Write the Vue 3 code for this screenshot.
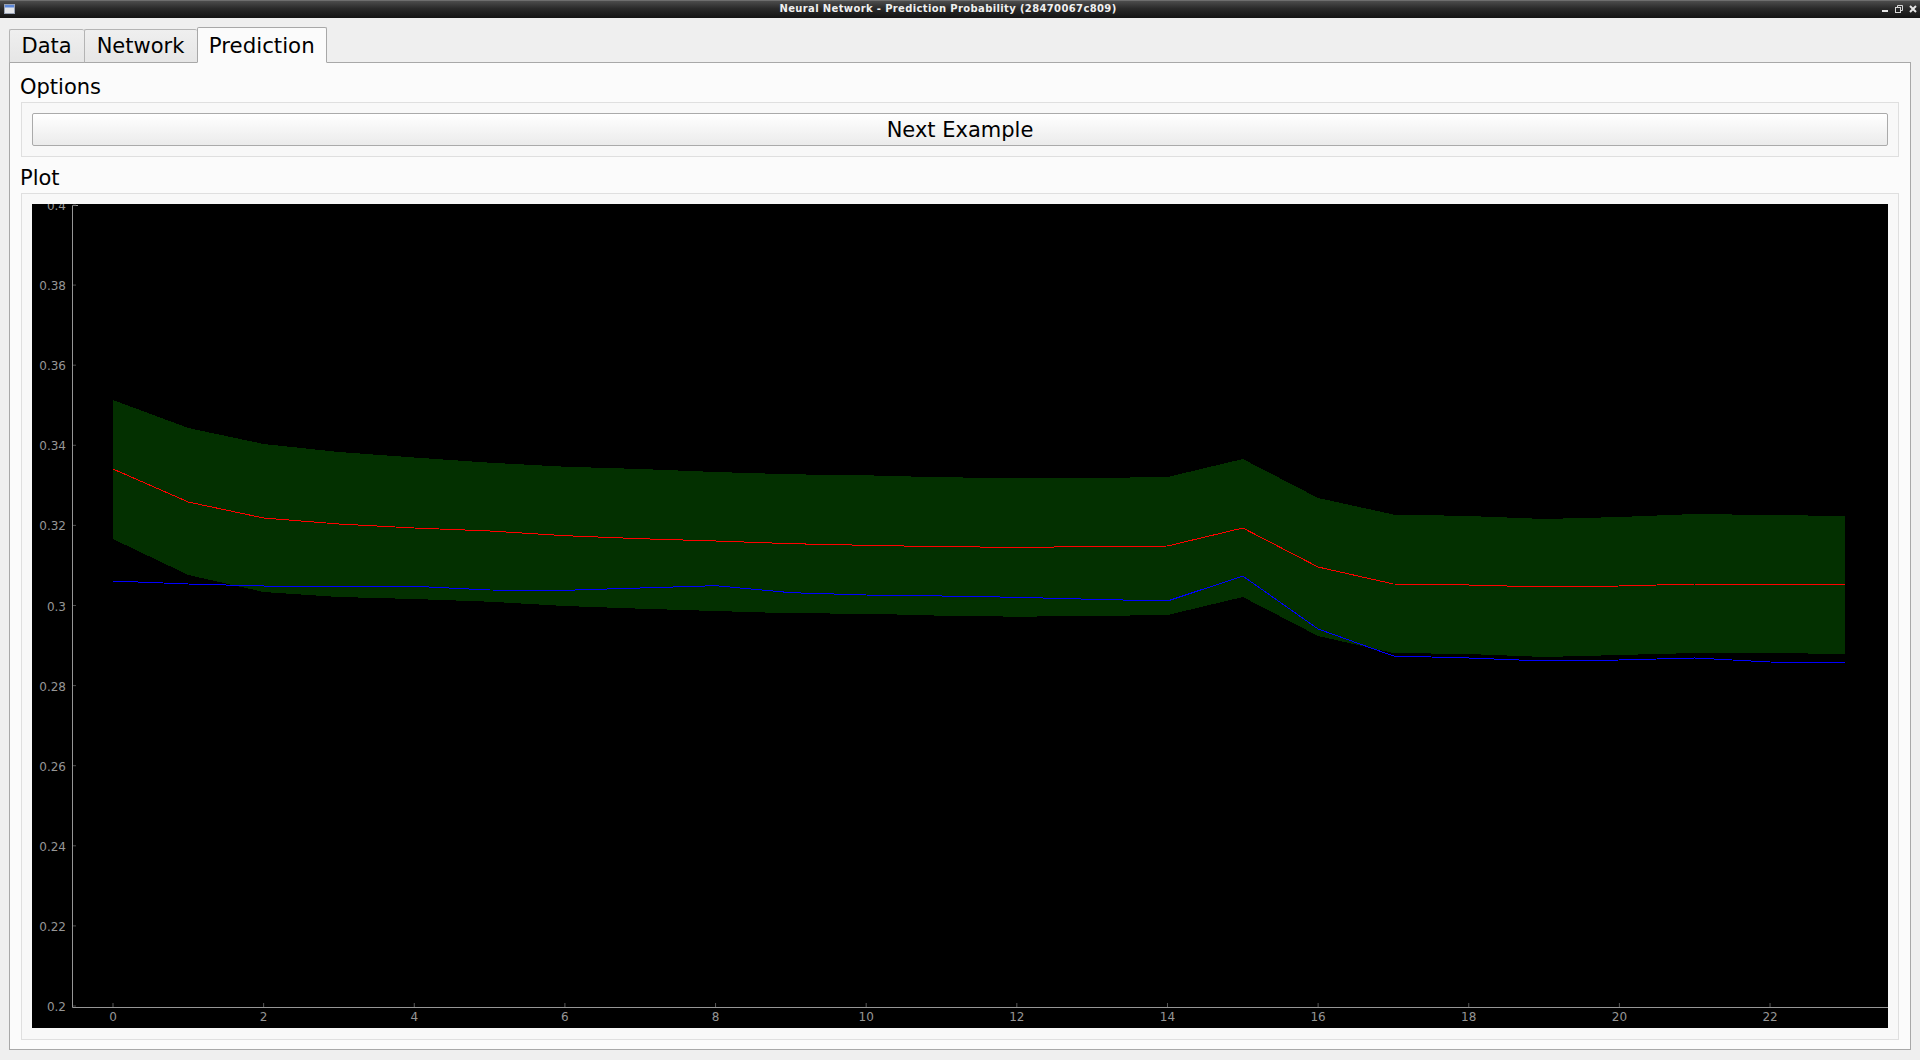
<script setup>
const xAt = (i) => 113 + i * 75.32

const top = [400, 428, 444, 452, 457.5, 462.7, 466.7, 469, 472, 474.3, 475.3, 477.3, 478, 478, 477, 459, 498, 514.5, 516, 519, 517, 514, 515, 516]
const bottom = [539, 575, 592, 597, 599, 601.7, 606, 608.7, 611, 613.3, 613.7, 615.7, 616.7, 616, 615, 597, 636, 653, 654, 657, 655, 653, 653, 654]
const red = [469, 502, 518, 524, 528, 531, 535.7, 538.7, 541, 543.7, 545.3, 546.7, 547.3, 546.7, 546, 528, 567, 584, 585, 587, 586, 584, 584, 585]
const blue = [581, 584, 586, 586, 586.3, 590, 590.3, 588, 585.7, 592.7, 595, 596, 597.3, 599.3, 601, 576, 629, 656, 658, 661, 660, 658, 662, 663]

const toPoints = (values) => values.map((v, i) => `${xAt(i).toFixed(1)},${v}`).join(' ')

const bandPoints = toPoints(top) + ' ' +
  [...bottom].map((v, i) => `${xAt(i).toFixed(1)},${v}`).reverse().join(' ')
const redPoints = toPoints(red)
const bluePoints = toPoints(blue)

const xTicks = Array.from({ length: 12 }, (_, k) => ({ label: String(k * 2), x: xAt(k * 2) }))
const yTicks = ['0.4', '0.38', '0.36', '0.34', '0.32', '0.3', '0.28', '0.26', '0.24', '0.22', '0.2']
  .map((label, k) => ({ label, y: 205 + k * 80.1 }))
const tabs = ['Data', 'Network', 'Prediction']
</script>

<template>
  <div class="window">
    <header class="titlebar">
      <svg class="app-icon" width="11" height="10" viewBox="0 0 11 10">
        <rect x="0.5" y="0.5" width="10" height="9" fill="#e4e6ea" stroke="#9aa3b5" />
        <rect x="1" y="1" width="9" height="2.5" fill="#5a86d8" />
      </svg>
      <span class="title">Neural Network - Prediction Probability (28470067c809)</span>
      <div class="controls">
        <svg width="8" height="8" viewBox="0 0 8 8"><rect x="1" y="5" width="6" height="2" fill="#e6e6e6" /></svg>
        <svg width="8" height="8" viewBox="0 0 8 8" fill="none" stroke="#d8d8d8"><rect x="0.5" y="2.5" width="5" height="5" /><path d="M2.5 2.5V0.5H7.5V5.5H5.5" /></svg>
        <svg width="8" height="8" viewBox="0 0 8 8" fill="none" stroke="#e6e6e6" stroke-width="2"><path d="M1 1L7 7M7 1L1 7" /></svg>
      </div>
    </header>

    <main class="body">
      <nav class="tabbar">
        <button
          v-for="tab in tabs"
          :key="tab"
          class="tab"
          :class="{ active: tab === 'Prediction' }"
        >{{ tab }}</button>
      </nav>

      <section class="pane">
        <h2 class="group-title first">Options</h2>
        <div class="group options">
          <button class="next">Next Example</button>
        </div>

        <h2 class="group-title">Plot</h2>
        <div class="group plot">
          <svg class="chart" viewBox="32 204 1856 824" width="1856" height="824">
            <polygon :points="bandPoints" fill="#033000" shape-rendering="crispEdges" />
            <polyline :points="redPoints" fill="none" stroke="#ff0000" stroke-width="1" shape-rendering="crispEdges" />
            <polyline :points="bluePoints" fill="none" stroke="#0000ff" stroke-width="1" shape-rendering="crispEdges" />

            <path d="M72.5 205.5V1007.5H1888M72.5 205.5H78" fill="none" stroke="#969696" stroke-width="1" />
            <g v-for="t in yTicks" :key="t.label">
              <line x1="73" x2="76" :y1="t.y" :y2="t.y" stroke="#4a4a4a" />
              <text class="tick" x="66" :y="t.y + 5" text-anchor="end">{{ t.label }}</text>
            </g>
            <g v-for="t in xTicks" :key="t.label">
              <line :x1="t.x" :x2="t.x" y1="1003" y2="1007" stroke="#5a5a5a" />
              <text class="tick" :x="t.x" y="1020.5" text-anchor="middle">{{ t.label }}</text>
            </g>
          </svg>
        </div>
      </section>
    </main>
  </div>
</template>

<style>
html, body { margin: 0; background: #efefef; overflow: hidden; }
</style>

<style scoped>
.window {
  width: 1920px;
  height: 1060px;
  display: flex;
  flex-direction: column;
  background: #efefef;
  font-family: "DejaVu Sans", sans-serif;
  color: #000;
}
.titlebar {
  height: 18px;
  flex: none;
  position: relative;
  display: flex;
  align-items: center;
  justify-content: center;
  box-sizing: border-box;
  border-top: 1px solid #6e6e6e;
  background: linear-gradient(#4c4c4c, #2a2a2a 45%, #141414);
}
.app-icon { position: absolute; left: 4px; top: 3px; }
.title {
  font-size: 10px;
  font-weight: 700;
  color: #f0f0f0;
  letter-spacing: 0.36px;
  margin-left: -24px;
  margin-top: -2px;
}
.controls {
  position: absolute;
  right: 3px;
  top: 4px;
  display: flex;
  gap: 6px;
}
.body {
  flex: 1;
  display: flex;
  flex-direction: column;
  padding: 0 9px 10px;
  min-height: 0;
}
.tabbar {
  height: 44px;
  flex: none;
  display: flex;
  align-items: flex-end;
  position: relative;
  z-index: 1;
}
.tab {
  height: 34px;
  box-sizing: border-box;
  margin: 0 0 -1px;
  padding: 0 12.5px 0 11.5px;
  font: inherit;
  font-size: 21px;
  color: #000;
  background: linear-gradient(#efefef, #e6e6e6);
  border: 1px solid #b4b4b4;
  border-right: 0;
  border-bottom-color: #a8a8a8;
  border-radius: 2px 2px 0 0;
}
.tab.active {
  height: 36px;
  background: #fbfbfb;
  border-right: 1px solid #a8a8a8;
  border-color: #a8a8a8;
  border-bottom-color: #fbfbfb;
  padding: 0 11px 0 11px;
  font-size: 21.3px;
}
.pane {
  flex: 1;
  min-height: 0;
  display: flex;
  flex-direction: column;
  box-sizing: border-box;
  padding: 0 11px 9px;
  background: #fbfbfb;
  border: 1px solid #a8a8a8;
}
.group-title {
  height: 36px;
  flex: none;
  box-sizing: border-box;
  margin: 0;
  padding-top: 6px;
  display: flex;
  align-items: center;
  font-size: 21px;
  font-weight: 400;
  position: relative;
  left: -1px;
}
.group-title.first { height: 39px; padding-top: 9px; }
.group {
  box-sizing: border-box;
  border: 1px solid #dfdfdf;
  background: #f8f8f8;
  padding: 10px;
}
.options { height: 55px; flex: none; }
.next {
  display: block;
  width: 100%;
  height: 33px;
  padding: 0;
  font: inherit;
  font-size: 21px;
  color: #000;
  border: 1px solid #aaa;
  border-radius: 2px;
  background: linear-gradient(#ffffff, #ebebeb);
}
.plot { flex: 1; min-height: 0; }
.chart {
  display: block;
  background: #000;
}
.tick {
  font-family: "DejaVu Sans", sans-serif;
  font-size: 12px;
  fill: #969696;
}
</style>
